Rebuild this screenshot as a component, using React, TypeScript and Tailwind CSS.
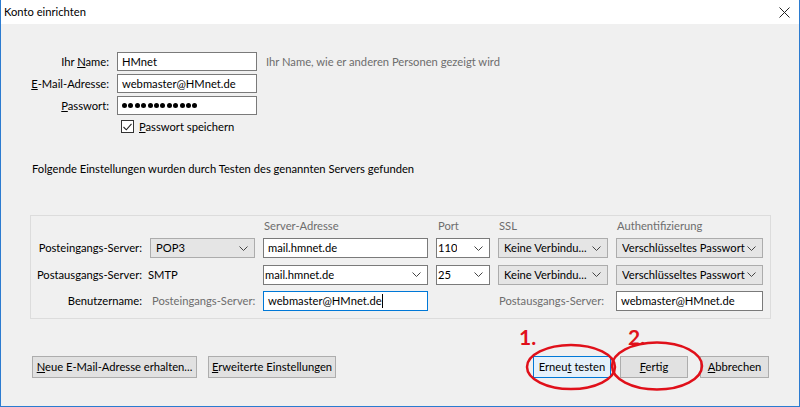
const Chevron = () => (
  <svg width="9" height="5" viewBox="0 0 9 5" className="shrink-0">
    <path d="M0.5 0.5 L4.5 4.5 L8.5 0.5" fill="none" stroke="#444" strokeWidth="1" />
  </svg>
);

function TextBox({ value, focused, cursor }: { value: string; focused?: boolean; cursor?: boolean }) {
  return (
    <div
      className={`h-[20px] bg-white border flex items-center px-[4px] ${
        focused ? "border-[#0078d7]" : "border-[#7a7a7a]"
      }`}
    >
      <span>{value}</span>
      {cursor && <span className="w-px h-[14px] bg-black" />}
    </div>
  );
}

function Combo({ value, editable }: { value: string; editable?: boolean }) {
  return (
    <div
      className={`h-[20px] border flex items-center justify-between pr-[6px] ${
        editable ? "bg-white border-[#7a7a7a] pl-[1px]" : "bg-[#e5e5e5] border-[#acacac] pl-[5px]"
      }`}
    >
      <span className="overflow-hidden">{value}</span>
      <Chevron />
    </div>
  );
}

function Button({
  children,
  focused,
  className = "",
}: {
  children: React.ReactNode;
  focused?: boolean;
  className?: string;
}) {
  return (
    <div
      className={`h-[22px] flex items-center justify-center border ${
        focused ? "bg-[#e5f1fb] border-[#0078d7]" : "bg-[#e1e1e1] border-[#adadad]"
      } ${className}`}
    >
      {children}
    </div>
  );
}

const cols = "grid grid-cols-[111px_105px_165px_54px_110px_147px] gap-x-[8px] items-center";

export default function App() {
  return (
    <div className="w-[800px] h-[407px] flex flex-col border-x border-b border-[#2b7bd0] font-['Lato',sans-serif] text-[11.2px] leading-none text-black whitespace-nowrap select-none">
      <div className="h-[24px] bg-white flex items-center justify-between pl-[3px] pr-[9px]">
        <span>Konto einrichten</span>
        <svg width="11" height="11" viewBox="0 0 11 11">
          <path d="M0.5 0.5 L10.5 10.5 M10.5 0.5 L0.5 10.5" stroke="#222" strokeWidth="1" />
        </svg>
      </div>

      <div className="flex-1 bg-[#f0f0f0] relative flex flex-col">
        {/* account */}
        <div className="mt-[28px] grid grid-cols-[108px_140px_auto] gap-x-[8px] gap-y-[3px] items-center">
          <span className="text-right">
            Ihr <u>N</u>ame:
          </span>
          <div className="h-[19px] bg-white border border-[#7a7a7a] flex items-center px-[4px]">HMnet</div>
          <span className="text-[#6d6d6d] pl-[1px]">Ihr Name, wie er anderen Personen gezeigt wird</span>
          <span className="text-right">
            <u>E</u>-Mail-Adresse:
          </span>
          <div className="h-[19px] bg-white border border-[#7a7a7a] flex items-center px-[4px]">webmaster@HMnet.de</div>
          <span />
          <span className="text-right">
            <u>P</u>asswort:
          </span>
          <div className="h-[19px] bg-white border border-[#7a7a7a] flex items-center px-[4px] gap-[1.4px]">
            {Array.from({ length: 12 }).map((_, i) => (
              <span key={i} className="w-[5px] h-[5px] rounded-full bg-black" />
            ))}
          </div>
          <span />
        </div>

        <div className="flex items-center ml-[120px] mt-[5px] gap-[5px]">
          <div className="w-[13px] h-[13px] border border-[#333] bg-white flex items-center justify-center">
            <svg width="9" height="8" viewBox="0 0 9 8">
              <path d="M0.5 4 L3.3 6.8 L8.5 0.8" fill="none" stroke="#222" strokeWidth="1.1" />
            </svg>
          </div>
          <span>
            <u>P</u>asswort speichern
          </span>
        </div>

        <div className="ml-[31px] mt-[30px] h-[11px]">Folgende Einstellungen wurden durch Testen des genannten Servers gefunden</div>

        {/* server group */}
        <div className="ml-[29px] mr-[28px] mt-[41px] h-[104px] border border-[#dcdcdc] pt-[4px] pr-[6px]">
          <div className={cols}>
            <span />
            <span />
            <span className="text-[#6d6d6d] pl-[1px] h-[12px]">Server-Adresse</span>
            <span className="text-[#6d6d6d] pl-[2px]">Port</span>
            <span className="text-[#6d6d6d] pl-[1px]">SSL</span>
            <span className="text-[#6d6d6d] pl-[1px]">Authentifizierung</span>
          </div>
          <div className={`mt-[6px] gap-y-[6.5px] ${cols}`}>
            <span className="text-right">Posteingangs-Server:</span>
            <Combo value="POP3" />
            <TextBox value="mail.hmnet.de" />
            <Combo value="110" editable />
            <Combo value="Keine Verbindu..." />
            <Combo value="Verschlüsseltes Passwort" />

            <span className="text-right">Postausgangs-Server:</span>
            <span className="-ml-[2px]">SMTP</span>
            <Combo value="mail.hmnet.de" editable />
            <Combo value="25" editable />
            <Combo value="Keine Verbindu..." />
            <Combo value="Verschlüsseltes Passwort" />

            <span className="text-right">Benutzername:</span>
            <span className="text-[#6d6d6d] pl-[2px]">Posteingangs-Server:</span>
            <TextBox value="webmaster@HMnet.de" focused cursor />
            <span />
            <span className="text-[#6d6d6d] pl-[1px]">Postausgangs-Server:</span>
            <TextBox value="webmaster@HMnet.de" />
          </div>
        </div>

        {/* buttons */}
        <div className="mt-[37px] flex items-center pl-[31px] pr-[30px]">
          <Button className="w-[165px]">
            <span>
              <u>N</u>eue E-Mail-Adresse erhalten...
            </span>
          </Button>
          <Button className="w-[128px] ml-[11px]">
            <span>
              <u>E</u>rweiterte Einstellungen
            </span>
          </Button>
          <div className="flex-1" />
          <Button className="w-[78px]" focused>
            <span>
              Erneu<u>t</u> testen
            </span>
          </Button>
          <Button className="w-[68px] ml-[9px]">
            <span>
              <u>F</u>ertig
            </span>
          </Button>
          <Button className="w-[69px] ml-[12px]">
            <span>
              <u>A</u>bbrechen
            </span>
          </Button>
        </div>

        {/* annotations */}
        <svg className="absolute left-0 top-0 pointer-events-none" width="798" height="381" viewBox="1 24 798 381">
          <ellipse cx="571" cy="367" rx="44" ry="22" fill="none" stroke="#e0101a" strokeWidth="2.5" />
          <ellipse cx="657" cy="366" rx="45" ry="23.5" fill="none" stroke="#e0101a" strokeWidth="2.5" />
        </svg>
        <span className="absolute left-[518px] top-[302px] text-[#e0101a] font-bold text-[21px] leading-none">1.</span>
        <span className="absolute left-[627px] top-[302px] text-[#e0101a] font-bold text-[21px] leading-none">2.</span>
      </div>
    </div>
  );
}
